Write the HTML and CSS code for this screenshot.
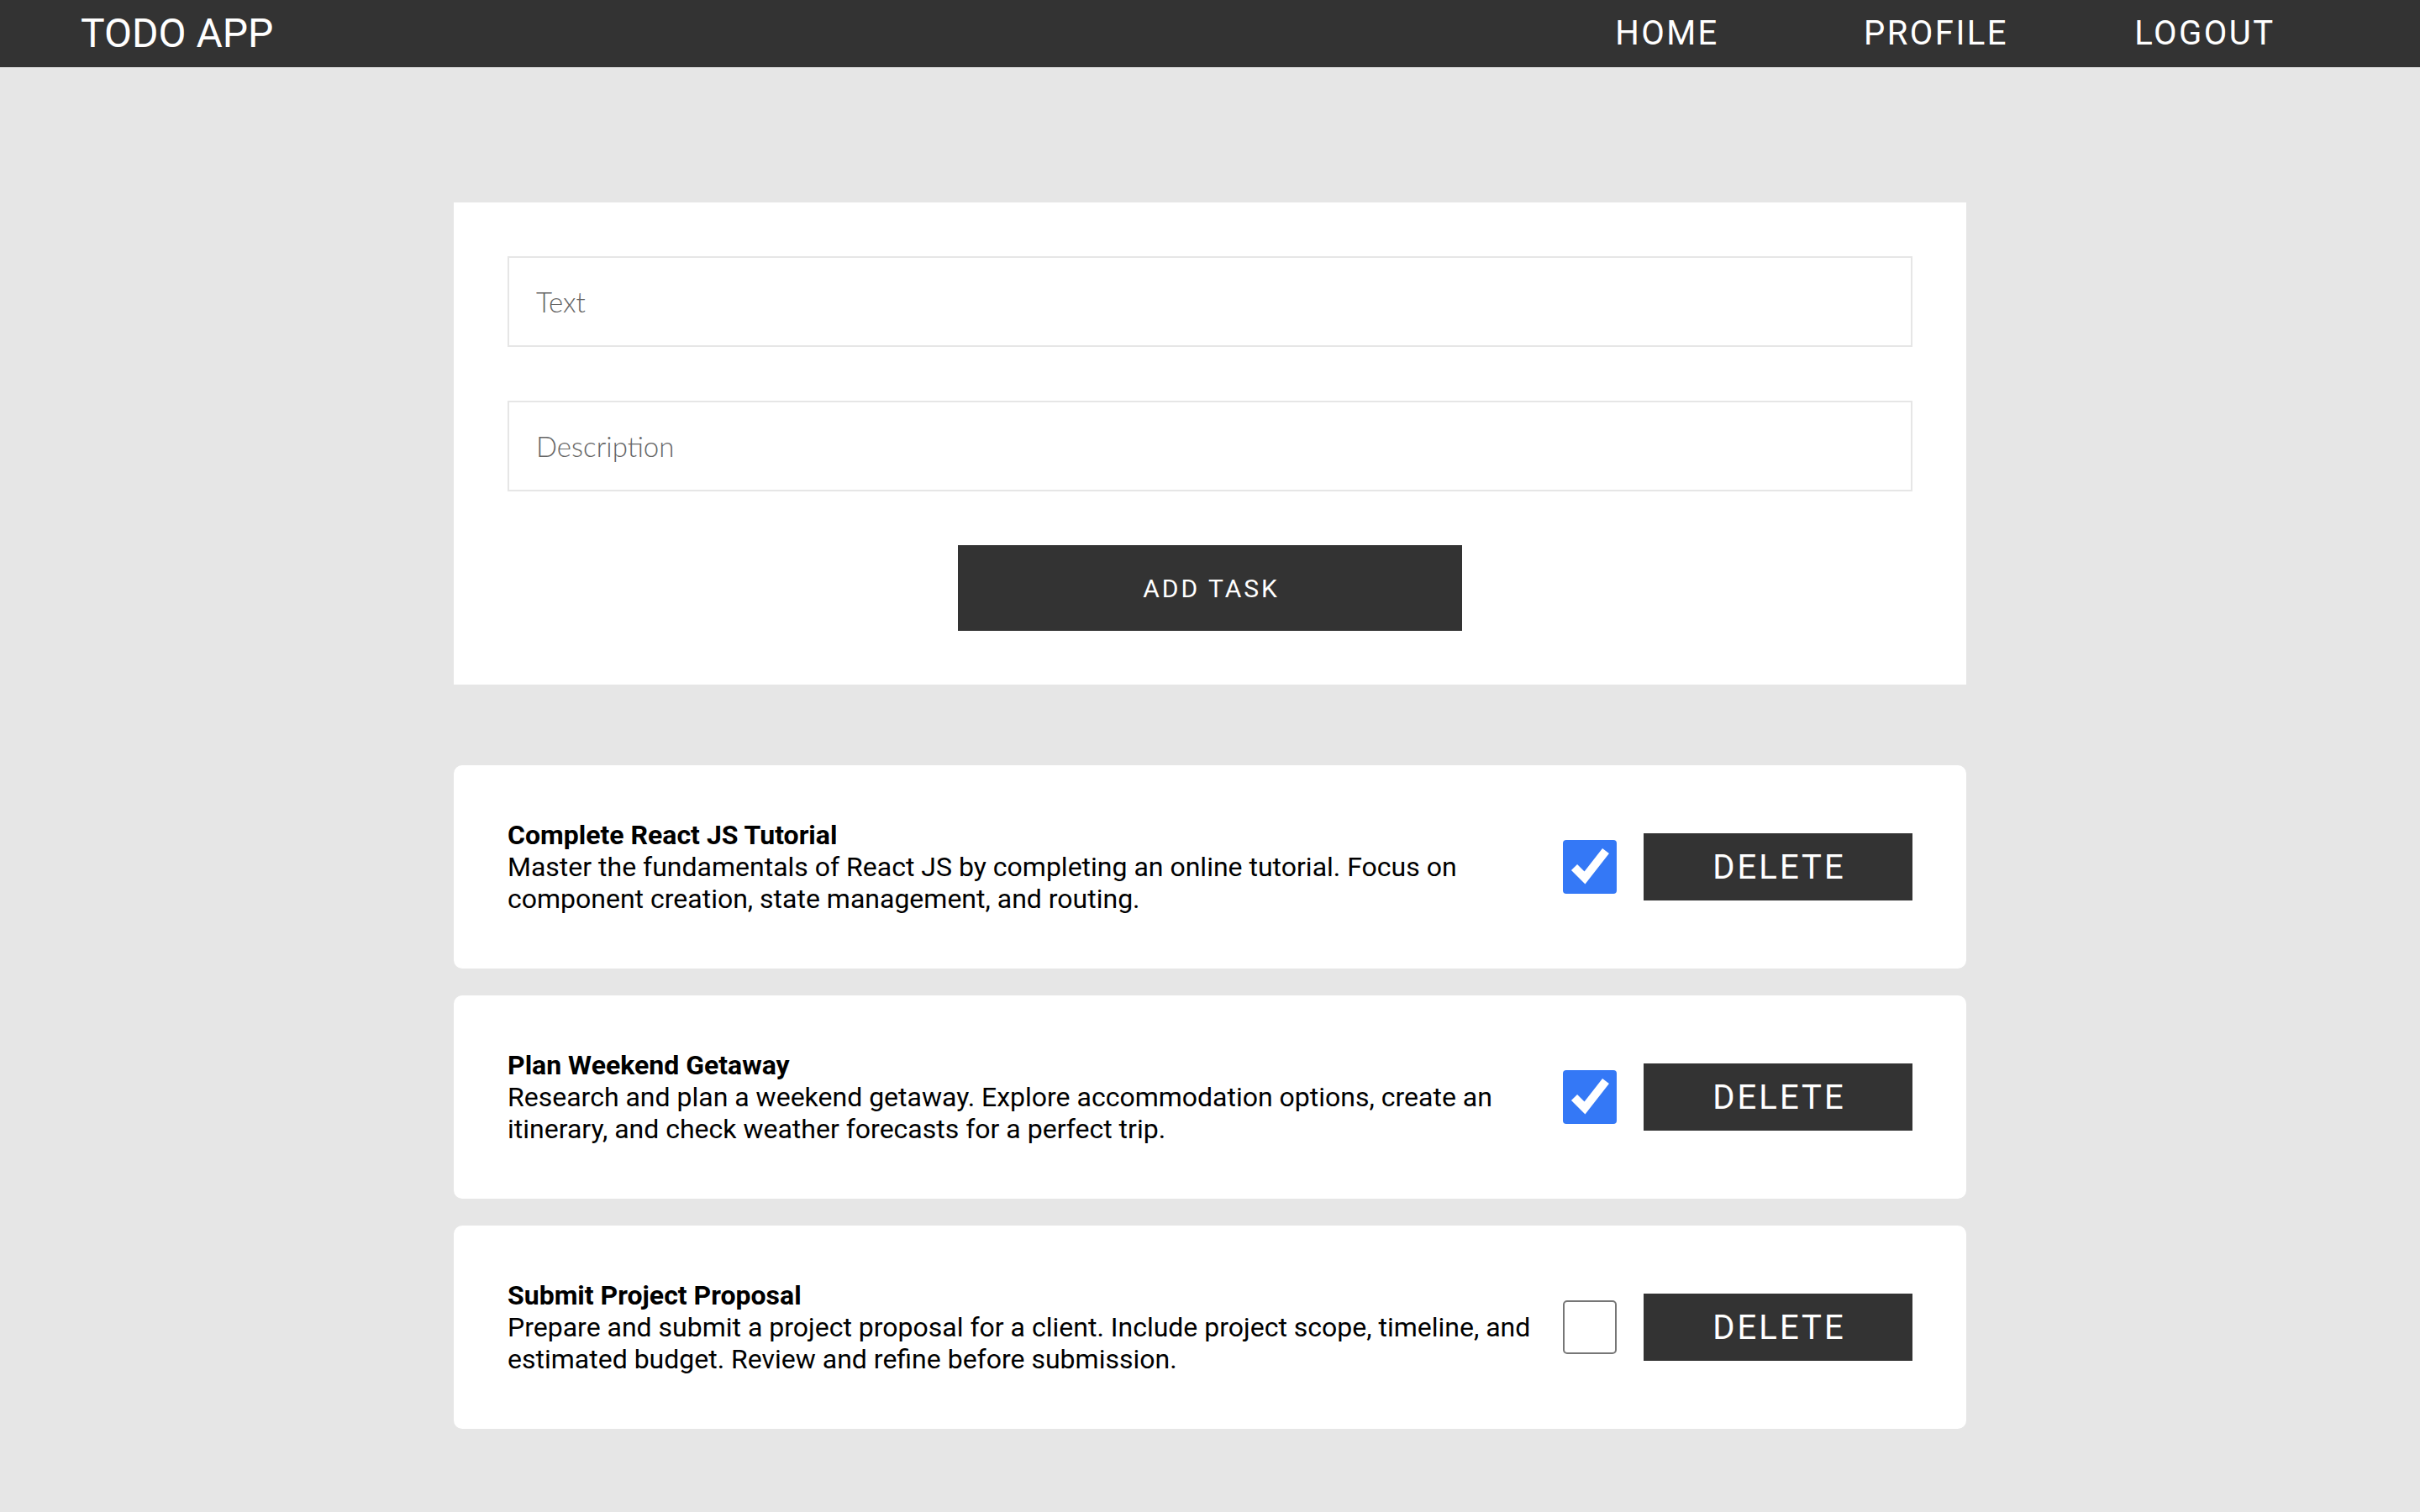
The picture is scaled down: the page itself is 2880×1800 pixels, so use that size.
FILE: index.html
```html
<!DOCTYPE html>
<html lang="en">
<head>
<meta charset="utf-8">
<title>Todo App</title>
<link rel="stylesheet" href="styles.css">
</head>
<body>
<header class="topbar">
  <div class="brand">TODO APP</div>
  <nav class="nav">
    <a class="nav-link" href="#">HOME</a>
    <a class="nav-link" href="#">PROFILE</a>
    <a class="nav-link" href="#">LOGOUT</a>
  </nav>
</header>

<main class="main">
  <form class="task-form">
    <input class="field" type="text" placeholder="Text">
    <input class="field" type="text" placeholder="Description">
    <button class="add-btn" type="button">ADD TASK</button>
  </form>

  <section class="task-list">
    <article class="task-card">
      <div class="task-text">
        <div class="task-title">Complete React JS Tutorial</div>
        <div class="task-desc">Master the fundamentals of React JS by completing an online tutorial. Focus on component creation, state management, and routing.</div>
      </div>
      <span class="check checked"><svg viewBox="0 0 64 64" width="64" height="64"><polyline points="13.5,32.5 26,45 51,13" fill="none" stroke="#fff" stroke-width="10" stroke-linejoin="miter"/></svg></span>
      <button class="del-btn" type="button">DELETE</button>
    </article>

    <article class="task-card">
      <div class="task-text">
        <div class="task-title">Plan Weekend Getaway</div>
        <div class="task-desc">Research and plan a weekend getaway. Explore accommodation options, create an itinerary, and check weather forecasts for a perfect trip.</div>
      </div>
      <span class="check checked"><svg viewBox="0 0 64 64" width="64" height="64"><polyline points="13.5,32.5 26,45 51,13" fill="none" stroke="#fff" stroke-width="10" stroke-linejoin="miter"/></svg></span>
      <button class="del-btn" type="button">DELETE</button>
    </article>

    <article class="task-card">
      <div class="task-text">
        <div class="task-title">Submit Project Proposal</div>
        <div class="task-desc">Prepare and submit a project proposal for a client. Include project scope, timeline, and estimated budget. Review and refine before submission.</div>
      </div>
      <span class="check"></span>
      <button class="del-btn" type="button">DELETE</button>
    </article>
  </section>
</main>
</body>
</html>
```

FILE: styles.css
```css
* { box-sizing: border-box; }

html, body {
  margin: 0;
  padding: 0;
}

body {
  background: #e6e6e6;
  font-family: Roboto, "Liberation Sans", sans-serif;
  color: #000;
  min-height: 1800px;
}

.topbar {
  height: 80px;
  background: #333333;
  display: flex;
  align-items: center;
  justify-content: space-between;
  padding: 0 96px;
}

.brand {
  color: #fff;
  font-family: Roboto, sans-serif;
  font-size: 48px;
  font-weight: 400;
  line-height: 80px;
}

.nav {
  display: flex;
}

.nav-link {
  width: 320px;
  text-align: center;
  color: #fff;
  text-decoration: none;
  font-family: Roboto, sans-serif;
  font-size: 40px;
  line-height: 80px;
  letter-spacing: 2.5px;
}

.main {
  width: 1800px;
  margin: 161px auto 0;
}

.task-form {
  background: #fff;
  padding: 64px;
  display: flex;
  flex-direction: column;
  align-items: center;
  gap: 64px;
  margin: 0 0 96px;
}

.field {
  width: 100%;
  height: 108px;
  border: 2px solid #e6e6e6;
  padding: 0 32px;
  font-family: Lato, sans-serif;
  font-weight: 300;
  font-size: 33px;
  color: #333;
  background: #fff;
  outline: none;
}

.field::placeholder {
  color: #666666;
}

.add-btn {
  width: 600px;
  height: 102px;
  background: #333333;
  color: #fff;
  border: none;
  font-family: Roboto, sans-serif;
  font-size: 30px;
  letter-spacing: 3px;
  padding: 0 0 0 3px;
  cursor: pointer;
}

.task-list {
  display: flex;
  flex-direction: column;
  gap: 32px;
}

.task-card {
  background: #fff;
  border-radius: 10px;
  padding: 63.75px 64px;
  display: flex;
  align-items: center;
  gap: 32px;
}

.task-text {
  flex: 1;
  min-width: 0;
}

.task-title {
  font-size: 32px;
  font-weight: 700;
  line-height: 39.5px;
}

.task-desc {
  font-size: 32px;
  font-weight: 400;
  line-height: 37.5px;
}

.check {
  width: 64px;
  height: 64px;
  flex: none;
  border: 2px solid #767676;
  border-radius: 5px;
  background: #fff;
  display: flex;
}

.check.checked {
  border: none;
  background: #3478f6;
  border-radius: 4px;
}

.check svg {
  display: block;
}

.del-btn {
  width: 320px;
  height: 80px;
  flex: none;
  background: #333333;
  color: #fff;
  border: none;
  font-family: Roboto, sans-serif;
  font-size: 40px;
  letter-spacing: 3px;
  padding: 0 0 0 3px;
  cursor: pointer;
}
```
